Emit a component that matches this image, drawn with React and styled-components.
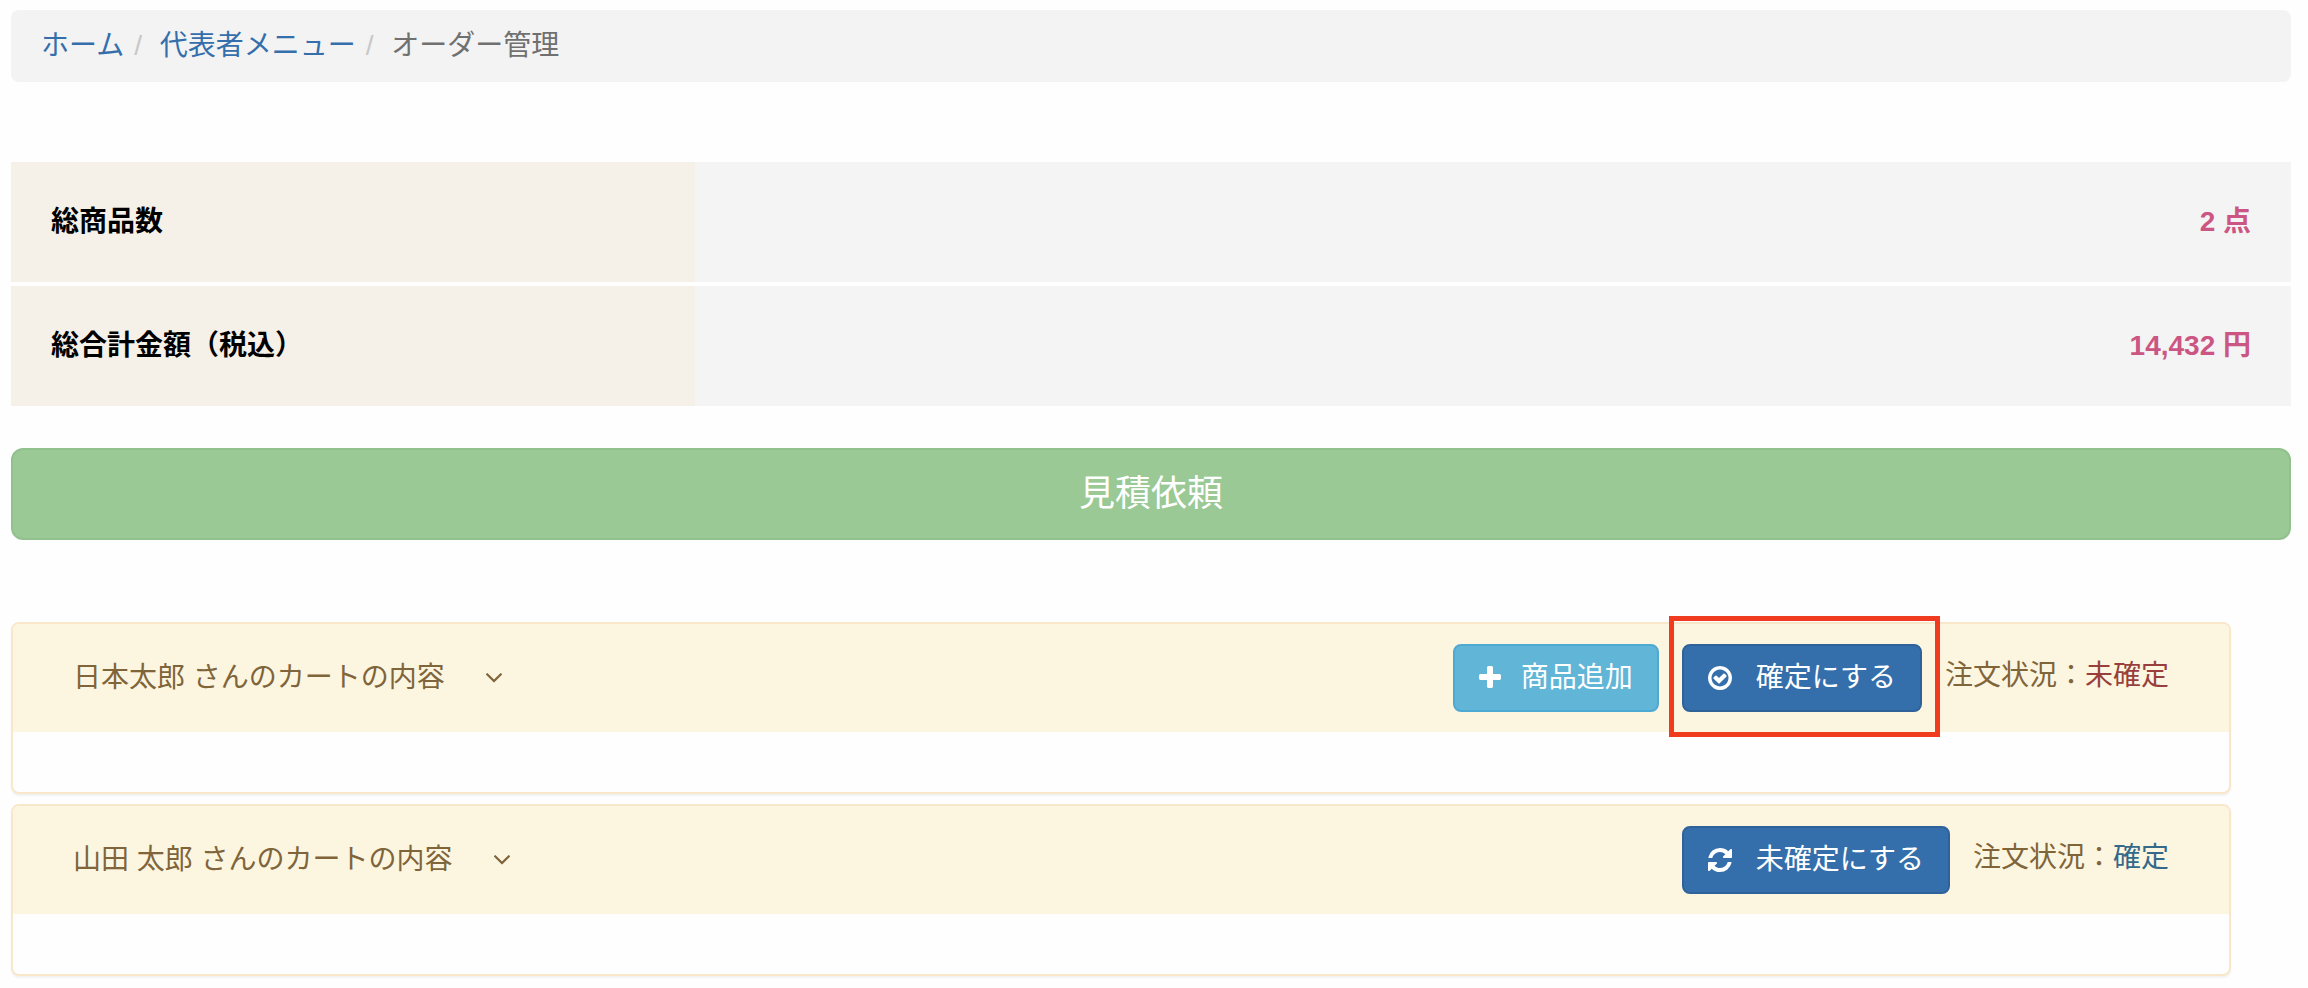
import styled, { createGlobalStyle, css } from 'styled-components'

const GlobalStyle = createGlobalStyle`
  * {
    box-sizing: border-box;
  }

  body {
    margin: 0;
    background: #fefefe;
    color: #333;
    font-family: 'Liberation Sans', 'Noto Sans CJK JP', sans-serif;
    font-size: 28px;
    line-height: 40px;
  }
`

const Page = styled.main`
  padding: 10px 17px 12px 11px;
`

const Breadcrumb = styled.ol`
  display: flex;
  margin: 0;
  padding: 16px 30px;
  list-style: none;
  background: #f3f3f3;
  border-radius: 8px;
`

const Crumb = styled.li`
  color: #707070;

  & + &::before {
    content: '/\\00a0';
    padding: 0 10px;
    color: #c8c8c8;
  }
`

const CrumbLink = styled.a`
  color: #346fab;
  text-decoration: none;

  &:hover {
    text-decoration: underline;
  }
`

const Summary = styled.table`
  width: 100%;
  margin: 80px 0 42px;
  border-collapse: collapse;
  font-weight: bold;
`

const SummaryRow = styled.tr`
  & + & {
    border-top: 4px solid #fefefe;
  }
`

const SummaryLabel = styled.th`
  width: 30%;
  padding: 40px;
  background: #f5f1e9;
  color: #000;
  text-align: left;
`

const SummaryValue = styled.td`
  padding: 40px;
  background: #f4f4f4;
  color: #cc5683;
  text-align: right;
`

const buttonColors = {
  success: css`
    background: #9ac995;
    border-color: #91c18d;
  `,
  info: css`
    background: #61b5d6;
    border-color: #4faad3;
  `,
  primary: css`
    background: #356fab;
    border-color: #2f6299;
  `,
}

const Button = styled.button`
  display: flex;
  align-items: center;
  gap: ${({ $gap }) => $gap || 24}px;
  padding: 12px 24px;
  border: 2px solid;
  border-radius: 8px;
  color: #fff;
  font: inherit;
  white-space: nowrap;
  cursor: pointer;
  ${({ $variant }) => buttonColors[$variant]}
`

const EstimateButton = styled(Button)`
  justify-content: center;
  width: 100%;
  padding: 20px 32px;
  border-radius: 12px;
  font-size: 36px;
  line-height: 48px;
`

const CartList = styled.section`
  display: flex;
  flex-direction: column;
  gap: 10px;
  margin: 82px 60px 0 0;
`

const Panel = styled.article`
  background: #fefefe;
  border: 2px solid #f9e7ca;
  border-radius: 8px;
  box-shadow: 0 2px 2px rgba(0, 0, 0, 0.05);
`

const PanelHeading = styled.header`
  display: flex;
  align-items: center;
  justify-content: space-between;
  padding: 20px 60px;
  background: #fcf6e1;
  border-radius: 6px 6px 0 0;
  color: #80643a;
`

const PanelBody = styled.div`
  padding: 30px;
`

const CartToggle = styled.button`
  display: flex;
  align-items: center;
  gap: 40px;
  padding: 0;
  border: 0;
  background: none;
  color: inherit;
  font: inherit;
  cursor: pointer;
`

const Actions = styled.div`
  display: flex;
  align-items: center;
  gap: 23px;
`

const Highlight = styled.div`
  position: relative;

  &::after {
    content: '';
    position: absolute;
    inset: -28px -18px -25px -13px;
    border: 5px solid #f13b1e;
    pointer-events: none;
  }
`

const Status = styled.div`
  padding-bottom: 4px;
  white-space: nowrap;
`

const StatusValue = styled.span`
  color: ${({ $confirmed }) => ($confirmed ? '#34698a' : '#983f3e')};
`

const PlusIcon = () => (
  <svg width="22" height="24" viewBox="192 128 1408 1536" fill="currentColor" aria-hidden="true">
    <path d="M1600 736v192q0 40-28 68t-68 28h-416v416q0 40-28 68t-68 28h-192q-40 0-68-28t-28-68v-416h-416q-40 0-68-28t-28-68v-192q0-40 28-68t68-28h416v-416q0-40 28-68t68-28h192q40 0 68 28t28 68v416h416q40 0 68 28t28 68z" />
  </svg>
)

const CheckIcon = () => (
  <svg width="24" height="24" viewBox="128 128 1536 1536" fill="currentColor" aria-hidden="true">
    <path d="M1299 813l-422 422q-19 19-45 19t-45-19l-294-294q-19-19-19-45t19-45l102-102q19-19 45-19t45 19l147 147 275-275q19-19 45-19t45 19l102 102q19 19 19 45t-19 45zm141 83q0-148-73-273t-198-198-273-73-273 73-198 198-73 273 73 273 198 198 273 73 273-73 198-198 73-273zm224 0q0 209-103 385.5t-279.5 279.5-385.5 103-385.5-103-279.5-279.5-103-385.5 103-385.5 279.5-279.5 385.5-103 385.5 103 279.5 279.5 103 385.5z" />
  </svg>
)

const RefreshIcon = () => (
  <svg width="24" height="24" viewBox="128 128 1536 1536" fill="currentColor" aria-hidden="true">
    <path d="M1639 1056q0 5-1 7-64 268-268 434.5t-478 166.5q-146 0-282.5-55t-243.5-157l-129 129q-19 19-45 19t-45-19-19-45v-448q0-26 19-45t45-19h448q26 0 45 19t19 45-19 45l-137 137q71 66 161 102t187 36q134 0 250-65t186-179q11-17 53-117 8-23 30-23h192q13 0 22.5 9.5t9.5 22.5zm25-800v448q0 26-19 45t-45 19h-448q-26 0-45-19t-19-45 19-45l138-138q-148-137-349-137-134 0-250 65t-186 179q-11 17-53 117-8 23-30 23h-199q-13 0-22.5-9.5t-9.5-22.5v-7q65-268 270-434.5t480-166.5q146 0 284 55.5t245 156.5l130-129q19-19 45-19t45 19 19 45z" />
  </svg>
)

const ChevronIcon = () => (
  <svg width="18" height="10" viewBox="340 676 1112 569" fill="currentColor" aria-hidden="true">
    <path d="M1395 736q0 13-10 23l-466 466q-10 10-23 10t-23-10l-466-466q-10-10-10-23t10-23l50-50q10-10 23-10t23 10l393 393 393-393q10-10 23-10t23 10l50 50q10 10 10 23z" />
  </svg>
)

const Cart = ({ name, confirmed, children }) => (
  <Panel>
    <PanelHeading>
      <CartToggle type="button">
        {name} さんのカートの内容
        <ChevronIcon />
      </CartToggle>
      <Actions>
        {children}
        <Status>
          注文状況：
          <StatusValue $confirmed={confirmed}>{confirmed ? '確定' : '未確定'}</StatusValue>
        </Status>
      </Actions>
    </PanelHeading>
    <PanelBody />
  </Panel>
)

export default function App() {
  return (
    <Page lang="ja">
      <GlobalStyle />
      <nav>
        <Breadcrumb>
          <Crumb>
            <CrumbLink href="#home">ホーム</CrumbLink>
          </Crumb>
          <Crumb>
            <CrumbLink href="#menu">代表者メニュー</CrumbLink>
          </Crumb>
          <Crumb>オーダー管理</Crumb>
        </Breadcrumb>
      </nav>

      <Summary>
        <tbody>
          <SummaryRow>
            <SummaryLabel scope="row">総商品数</SummaryLabel>
            <SummaryValue>2 点</SummaryValue>
          </SummaryRow>
          <SummaryRow>
            <SummaryLabel scope="row">総合計金額（税込）</SummaryLabel>
            <SummaryValue>14,432 円</SummaryValue>
          </SummaryRow>
        </tbody>
      </Summary>

      <EstimateButton type="button" $variant="success">
        見積依頼
      </EstimateButton>

      <CartList>
        <Cart name="日本太郎">
          <Button type="button" $variant="info" $gap={20}>
            <PlusIcon />
            商品追加
          </Button>
          <Highlight>
            <Button type="button" $variant="primary">
              <CheckIcon />
              確定にする
            </Button>
          </Highlight>
        </Cart>
        <Cart name="山田 太郎" confirmed>
          <Button type="button" $variant="primary">
            <RefreshIcon />
            未確定にする
          </Button>
        </Cart>
      </CartList>
    </Page>
  )
}
